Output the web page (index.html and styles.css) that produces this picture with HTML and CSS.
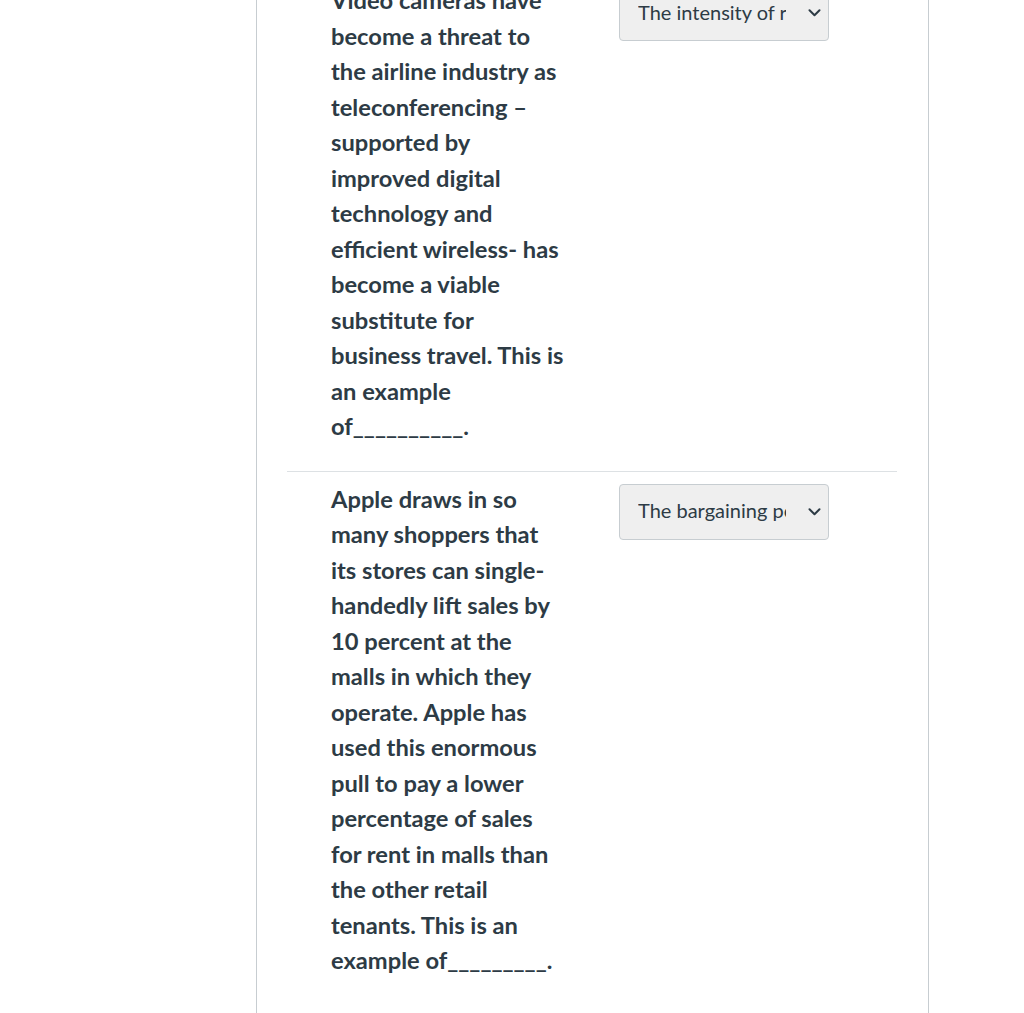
FILE: index.html
```html
<!DOCTYPE html>
<html>
<head>
<meta charset="utf-8">
<link rel="stylesheet" href="styles.css">
</head>
<body>
<div class="page">
  <div class="panel">
    <div class="row">
      <div class="question">Video cameras have become a threat to the airline industry as teleconferencing – supported by improved digital technology and efficient wireless- has become a viable substitute for business travel. This is an example of__________.</div>
      <div class="answer">
        <div class="select"><span class="sel-text">The intensity of rivalry among competitors</span><svg class="chev" viewBox="0 0 13 8" width="13" height="8"><path d="M1.5 1.2 L6.5 6.2 L11.5 1.2" fill="none" stroke="#2d3b45" stroke-width="2" stroke-linecap="round" stroke-linejoin="round"/></svg></div>
      </div>
    </div>
    <div class="row">
      <div class="question">Apple draws in so many shoppers that its stores can single-handedly lift sales by 10 percent at the malls in which they operate. Apple has used this enormous pull to pay a lower percentage of sales for rent in malls than the other retail tenants. This is an example of_________.</div>
      <div class="answer">
        <div class="select"><span class="sel-text">The bargaining power of buyers</span><svg class="chev" viewBox="0 0 13 8" width="13" height="8"><path d="M1.5 1.2 L6.5 6.2 L11.5 1.2" fill="none" stroke="#2d3b45" stroke-width="2" stroke-linecap="round" stroke-linejoin="round"/></svg></div>
      </div>
    </div>
  </div>
</div>
</body>
</html>
```
FILE: styles.css
```css
html, body {
  margin: 0;
  padding: 0;
  background: #ffffff;
  overflow: hidden;
}
body {
  font-family: Lato, "Liberation Sans", sans-serif;
  color: #2d3b45;
}
.page {
  width: 1024px;
  height: 1013px;
  overflow: hidden;
}
.panel {
  margin-left: 256px;
  width: 673px;
  border-left: 1px solid #c7cdd1;
  border-right: 1px solid #c7cdd1;
  margin-top: -28px;
  padding: 0 31px 0 30px;
  min-height: 1100px;
  box-sizing: border-box;
}
.row {
  display: flex;
  align-items: flex-start;
  padding: 10px 0 26px 44px;
  border-top: 1px solid #dde1e4;
}
.row:first-child {
  border-top: 1px solid transparent;
}
.question {
  width: 234px;
  font-size: 23.7px;
  font-weight: 700;
  line-height: 35.5px;
}
.answer {
  margin-left: 54px;
}
.select {
  display: flex;
  align-items: center;
  width: 210px;
  height: 56px;
  box-sizing: border-box;
  background: #efefef;
  border: 1px solid #c7cdd1;
  border-radius: 4px;
  padding: 0 7px 3px 18px;
  margin-top: 2px;
}
.sel-text {
  flex: 0 0 148px;
  width: 148px;
  overflow: hidden;
  white-space: nowrap;
  font-size: 20px;
  font-weight: 400;
  color: #2d3b45;
}
.chev {
  margin-left: auto;
  margin-top: 3px;
}
```
